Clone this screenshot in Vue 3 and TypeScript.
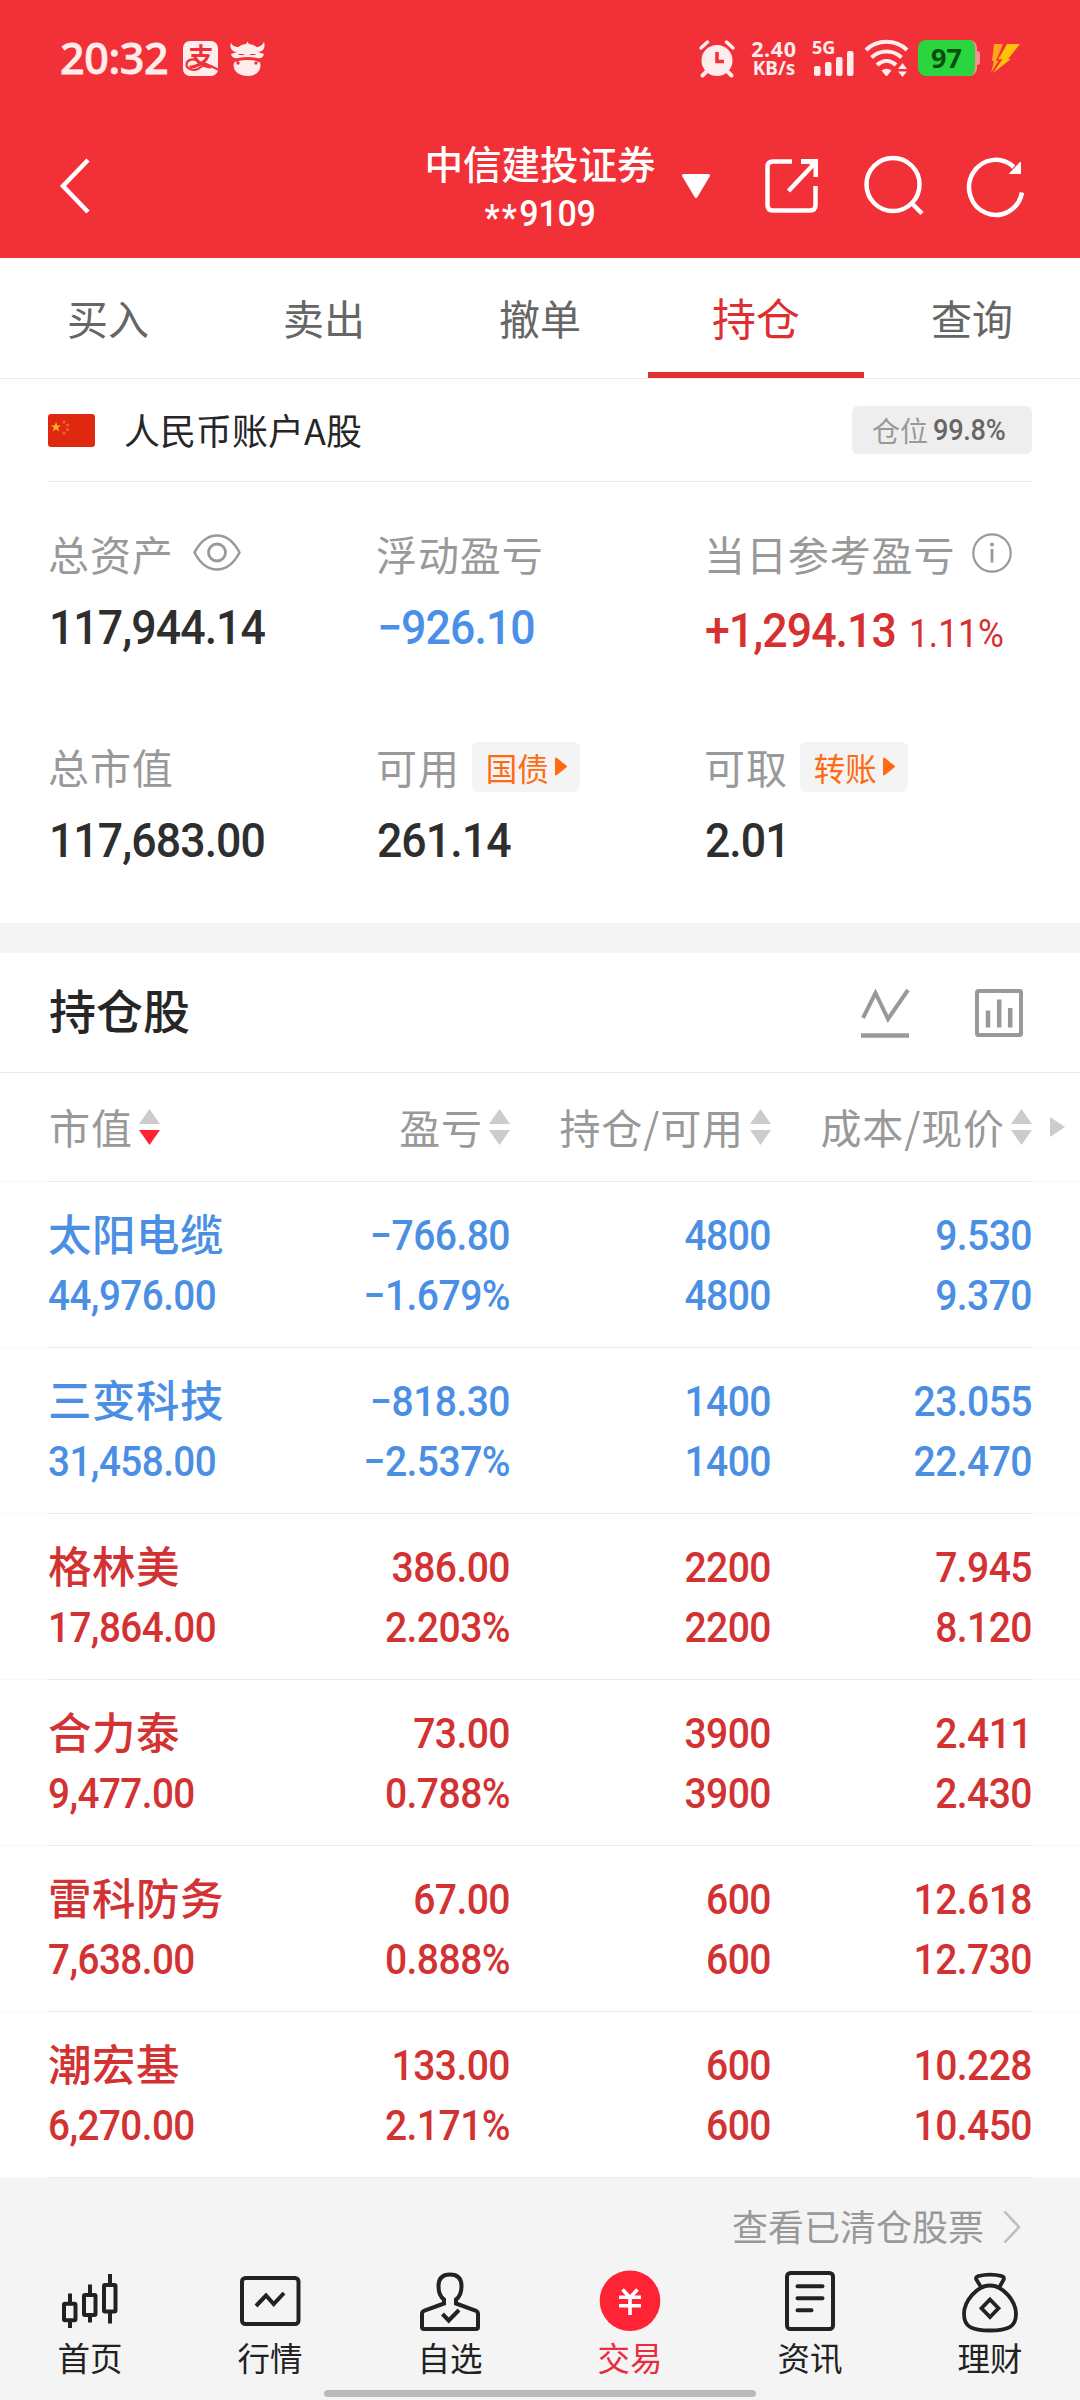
<script setup lang="ts">
type Tone = 'up' | 'down'

interface Holding {
  name: string
  value: string
  profit: string
  rate: string
  held: string
  usable: string
  cost: string
  price: string
  tone: Tone
}

const tabs: string[] = ['买入', '卖出', '撤单', '持仓', '查询']
const activeTab = '持仓'

const columns: { label: string; cls: string; sorted: boolean }[] = [
  { label: '市值', cls: 'c1', sorted: true },
  { label: '盈亏', cls: 'c2', sorted: false },
  { label: '持仓/可用', cls: 'c3', sorted: false },
  { label: '成本/现价', cls: 'c4', sorted: false },
]

const holdings: Holding[] = [
  { name: '太阳电缆', value: '44,976.00', profit: '−766.80', rate: '−1.679%', held: '4800', usable: '4800', cost: '9.530', price: '9.370', tone: 'down' },
  { name: '三变科技', value: '31,458.00', profit: '−818.30', rate: '−2.537%', held: '1400', usable: '1400', cost: '23.055', price: '22.470', tone: 'down' },
  { name: '格林美', value: '17,864.00', profit: '386.00', rate: '2.203%', held: '2200', usable: '2200', cost: '7.945', price: '8.120', tone: 'up' },
  { name: '合力泰', value: '9,477.00', profit: '73.00', rate: '0.788%', held: '3900', usable: '3900', cost: '2.411', price: '2.430', tone: 'up' },
  { name: '雷科防务', value: '7,638.00', profit: '67.00', rate: '0.888%', held: '600', usable: '600', cost: '12.618', price: '12.730', tone: 'up' },
  { name: '潮宏基', value: '6,270.00', profit: '133.00', rate: '2.171%', held: '600', usable: '600', cost: '10.228', price: '10.450', tone: 'up' },
]
</script>

<template>
  <div class="page">
    <header class="header">
      <div class="status">
        <span class="clock">20:32</span>
        <svg class="alipay" viewBox="0 0 35 35">
          <rect width="35" height="35" rx="7" fill="#ffecec" />
          <text x="18" y="24.5" text-anchor="middle" class="pay-char">支</text>
          <path d="M15 19.5C9 17 3.5 19 3.5 23.5S10 30 15 28C18 26.6 20 24.5 21 22.5M20 21.5L35 28.5" fill="none" stroke="#f23037" stroke-width="2.2" />
        </svg>
        <svg class="cow" viewBox="0 0 35 35">
          <path d="M1 1.5C-.5 6 1 10.500 7 11L1 13C2 17 5 18 8 17C14 15.500 21 15.500 27 17C30 18 33 17 34 13L28 11C34 10.500 35.500 6 34 .5C33 4 29.500 6 26.500 6C24.500 4 21 3 19 3L17.500 .8L16 3C14 3 10.500 4 8.500 6C5.500 6 2 5 1 1.500Z" fill="#ffecec" />
          <path d="M3.500 24C3.500 19.500 10 18.800 17.500 18.800S30.500 19.500 30.500 24C30.500 31 25 35 17.500 35S3.500 31 3.500 24Z" fill="#ffecec" />
          <path d="M8.500 13.500H14M20 13.500H25.500" stroke="#f23037" stroke-width="1.200" />
          <path d="M6 20.500C9 17.500 26 17.500 29 20.500" fill="none" stroke="#f23037" stroke-width="1.300" />
          <circle cx="8" cy="22" r="1.700" fill="#f23037" /><circle cx="26" cy="22" r="1.700" fill="#f23037" />
        </svg>
        <div class="status-right">
          <svg class="alarm" viewBox="0 0 36 37">
            <circle cx="18" cy="20.500" r="15.500" fill="#ffecec" />
            <path d="M2 8L8.500 2M34 8L27.500 2" stroke="#ffecec" stroke-width="3.500" stroke-linecap="round" />
            <path d="M7 32L3.500 35.500M29 32L32.500 35.500" stroke="#ffecec" stroke-width="4" stroke-linecap="round" />
            <path d="M18 12V21.500H25" fill="none" stroke="#f23037" stroke-width="3.500" />
          </svg>
          <div class="speed"><span class="rate">2.40</span><span class="unit">KB/s</span></div>
          <svg class="signal" viewBox="0 0 43 38">
            <text x="0" y="14.500" class="five-g">5G</text>
            <g fill="#ffecec">
              <rect x="2" y="27" width="6.500" height="10" rx="2" />
              <rect x="13" y="23" width="6.500" height="14" rx="2" />
              <rect x="24" y="18" width="6.500" height="19" rx="2" />
              <rect x="35" y="12" width="6.500" height="25" rx="2" />
            </g>
          </svg>
          <svg class="wifi" viewBox="0 0 44 37">
            <g fill="none" stroke="#ffecec" stroke-width="4">
              <path d="M1 10C12-1 31-1 42 10" />
              <path d="M6.500 17.500C15 9.500 28 9.500 36.500 17.500" />
              <path d="M12 25C18 19.500 25 19.500 31 25" />
            </g>
            <path d="M16.500 30.500Q21.500 27 26.500 30.500L22.500 35.500Q21.500 36.500 20.500 35.500Z" fill="#ffecec" />
            <path d="M33 29L37.500 23L42 29ZM33 31.500H42L37.500 37Z" fill="#ffecec" />
          </svg>
          <div class="battery"><span>97</span><i></i></div>
          <svg class="bolt" viewBox="0 0 30 31">
            <path d="M4 1H13L8 14L12 12L1 30L4 18L2 18Z" fill="#ffa51e" />
            <path d="M17 1H30L18 16H21L3 30L11 17H8Z" fill="#ffc20a" />
            <path d="M14 2L7 17H11L4 27" fill="none" stroke="#f23037" stroke-width="1.500" />
          </svg>
        </div>
      </div>
      <div class="titlebar">
        <svg class="back" viewBox="0 0 30 56"><path d="M28 2L3 28L28 54" fill="none" stroke="#fff" stroke-width="4.500" /></svg>
        <div class="title">
          <div class="broker">中信建投证券</div>
          <div class="acct"><span class="stars">**</span>9109</div>
        </div>
        <svg class="drop" viewBox="0 0 30 25"><path d="M2.500 1.500H27.500L15 22.500Z" fill="#fff" stroke="#fff" stroke-width="3" stroke-linejoin="round" /></svg>
        <svg class="share" viewBox="0 0 56 56">
          <path d="M28 3.500H9Q3.500 3.500 3.500 9V47Q3.500 52.500 9 52.500H46Q51.500 52.500 51.500 47V28" fill="none" stroke="#fff" stroke-width="4.500" />
          <path d="M24.500 33L50 6" stroke="#fff" stroke-width="4.500" />
          <path d="M37 1H54V19H49.500V9L45 6H37Z" fill="#fff" />
        </svg>
        <svg class="search" viewBox="0 0 62 62"><circle cx="30" cy="29.500" r="26.500" fill="none" stroke="#fff" stroke-width="4.500" /><path d="M48.500 48L59 58.500" stroke="#fff" stroke-width="4.500" /></svg>
        <svg class="refresh" viewBox="0 0 58 60">
          <path d="M46.700 11A26.700 27.500 0 1 0 55 36.500" fill="none" stroke="#fff" stroke-width="4.500" />
          <path d="M42.500 17.500L53.500 6V17.500Z" fill="#fff" stroke="#fff" />
        </svg>
      </div>
    </header>

    <nav class="tabs">
      <div v-for="t in tabs" :key="t" class="tab" :class="{ active: t === activeTab }">{{ t }}</div>
    </nav>

    <section class="account">
      <svg class="flag" viewBox="0 0 47 33">
        <rect width="47" height="33" rx="3" fill="#de2910" />
        <path d="M8 8L9.300 11.500H13L10 13.700L11.200 17.500L8 15.200L4.800 17.500L6 13.700L3 11.500H6.700Z" fill="#ffb01f" />
        <g fill="#f0672a"><circle cx="16" cy="8" r="1.500" /><circle cx="19.500" cy="11" r="1.500" /><circle cx="19.500" cy="15.500" r="1.500" /><circle cx="16" cy="19" r="1.500" /></g>
      </svg>
      <span class="acct-name">人民币账户A股</span>
      <div class="position"><span>仓位</span><b>99.8%</b></div>
    </section>

    <section class="stats">
      <div class="stat">
        <div class="label">总资产
          <svg class="eye" viewBox="0 0 48 37"><path d="M1.500 18.500C8 6 16 1.500 24 1.500S40 6 46.500 18.500C40 31 32 35.500 24 35.500S8 31 1.500 18.500Z" fill="none" stroke="#999" stroke-width="2.500" /><circle cx="24" cy="18.500" r="8.500" fill="none" stroke="#999" stroke-width="2.800" /></svg>
        </div>
        <div class="num">117,944.14</div>
      </div>
      <div class="stat">
        <div class="label">浮动盈亏</div>
        <div class="num blue">−926.10</div>
      </div>
      <div class="stat">
        <div class="label">当日参考盈亏
          <svg class="info" viewBox="0 0 40 40"><circle cx="20" cy="20" r="18.700" fill="none" stroke="#999" stroke-width="2.200" /><path d="M20 16V29.500" stroke="#999" stroke-width="2.800" /><circle cx="20" cy="11.500" r="1.900" fill="#999" /></svg>
        </div>
        <div class="num red">+1,294.13<small>1.11%</small></div>
      </div>
      <div class="stat">
        <div class="label">总市值</div>
        <div class="num">117,683.00</div>
      </div>
      <div class="stat">
        <div class="label">可用<span class="chip">国债<svg viewBox="0 0 12 19"><path d="M1 1.500L11 9.500L1 17.500Z" fill="#ff6a13" stroke="#ff6a13" stroke-width="2" stroke-linejoin="round" /></svg></span></div>
        <div class="num">261.14</div>
      </div>
      <div class="stat">
        <div class="label">可取<span class="chip">转账<svg viewBox="0 0 12 19"><path d="M1 1.500L11 9.500L1 17.500Z" fill="#ff6a13" stroke="#ff6a13" stroke-width="2" stroke-linejoin="round" /></svg></span></div>
        <div class="num">2.01</div>
      </div>
    </section>

    <div class="band"></div>

    <section class="heading">
      <h2>持仓股</h2>
      <svg class="trend" viewBox="0 0 48 50"><path d="M2 30L14.500 5L27 31L47 2" fill="none" stroke="#999" stroke-width="4" /><path d="M0 47.500H48" stroke="#999" stroke-width="4.500" /></svg>
      <svg class="bars" viewBox="0 0 48 48"><rect x="2" y="2" width="44" height="44" rx="1.500" fill="none" stroke="#999" stroke-width="4" /><path d="M13 21.500V38.500M24.200 10.500V38.500M35.200 19V38.500" stroke="#999" stroke-width="4.500" /></svg>
    </section>

    <div class="thead">
      <div v-for="c in columns" :key="c.label" class="cell" :class="c.cls">
        <span>{{ c.label }}</span>
        <svg class="sort" viewBox="0 0 21 36"><path d="M0 15L10.500 0L21 15Z" fill="#ccc" /><path d="M0 21L10.500 36L21 21Z" :fill="c.sorted ? '#ff2336' : '#ccc'" /></svg>
      </div>
      <svg class="more" viewBox="0 0 15 20"><path d="M0 0L15 10L0 20Z" fill="#ccc" /></svg>
    </div>
    <div class="rule"></div>

    <div v-for="h in holdings" :key="h.name" class="holding" :class="h.tone">
      <div class="row-body">
        <div class="c1"><div class="name">{{ h.name }}</div><div class="digits">{{ h.value }}</div></div>
        <div class="c2"><div class="digits">{{ h.profit }}</div><div class="digits">{{ h.rate }}</div></div>
        <div class="c3"><div class="digits">{{ h.held }}</div><div class="digits">{{ h.usable }}</div></div>
        <div class="c4"><div class="digits">{{ h.cost }}</div><div class="digits">{{ h.price }}</div></div>
      </div>
      <div class="rule"></div>
    </div>

    <footer class="footer">
      <div class="cleared"><span>查看已清仓股票</span><svg viewBox="0 0 18 34"><path d="M1.500 1.500L16 17L1.500 32.500" fill="none" stroke="#bdbdbd" stroke-width="2.500" /></svg></div>
      <div class="nav">
        <div class="item">
          <svg viewBox="0 0 70 68" fill="none" stroke="#222" stroke-width="4">
            <rect x="9" y="35.700" width="11.500" height="16.500" rx="1" /><path d="M15 25.500V35M15 53V60" />
            <rect x="29" y="27" width="11.500" height="20" rx="1" /><path d="M35 16.500V26M35 48V54.500" />
            <rect x="49" y="17" width="11.500" height="26.500" rx="1" /><path d="M55 6V16M55 44V55.500" />
          </svg>
          <span>首页</span>
        </div>
        <div class="item">
          <svg viewBox="0 0 70 68" fill="none" stroke="#222" stroke-width="4">
            <rect x="7" y="10" width="56.500" height="46" rx="3.500" /><path d="M21 38L31 27.500L38.700 36L49 25" />
          </svg>
          <span>行情</span>
        </div>
        <div class="item">
          <svg viewBox="0 0 70 68" fill="none" stroke="#222" stroke-width="4">
            <path d="M29 31.500C24 28 23.500 22 23.500 18C23.500 10 28 6.500 35 6.500S46.500 10 46.500 18C46.500 22 46 28 41 31.500V35.500L60.500 42.500Q63 43.500 63 46V59Q63 61 61 61H9Q7 61 7 59V46Q7 43.500 9.500 42.500L29 35.500Z" />
            <path d="M27.500 46L33.700 52.500L44 42" />
          </svg>
          <span>自选</span>
        </div>
        <div class="item on">
          <svg viewBox="0 0 70 68">
            <circle cx="35" cy="32.700" r="30.300" fill="#ff2336" />
            <path d="M24 29.300H46M24 37.700H46M35 29V47M27.500 21.500L35 29.500L42.500 21.500" fill="none" stroke="#fff" stroke-width="3.600" />
          </svg>
          <span>交易</span>
        </div>
        <div class="item">
          <svg viewBox="0 0 70 68" fill="none" stroke="#222" stroke-width="4">
            <rect x="12" y="5" width="46" height="56" rx="3.500" /><path d="M22.500 18.300H47.500M22.500 30.300H47.500M22.500 42.300H36.500" stroke-linecap="round" />
          </svg>
          <span>资讯</span>
        </div>
        <div class="item">
          <svg viewBox="0 0 70 68" fill="none" stroke="#222" stroke-width="3.800">
            <path d="M35 17.500C22 17.500 9 33 9 46C9 59 17 62.500 35 62.500S61 59 61 46C61 33 48 17.500 35 17.500Z" />
            <path d="M26 19L21.300 11.500Q20.500 9 23 8.200Q35 5.200 47 8.200Q49.500 9 48.700 11.500L44.500 19" />
            <path d="M35 31.500L43.500 40.300L35 49L26.500 40.300Z" />
          </svg>
          <span>理财</span>
        </div>
      </div>
      <div class="indicator"></div>
    </footer>
  </div>
</template>

<style>
body { margin: 0; background: #f4f4f4; }
</style>

<style scoped>
.page { width: 1080px; height: 2400px; overflow: hidden; background: #fff; font-family: "Noto Sans CJK SC", sans-serif; color: #222; }
.page * { box-sizing: border-box; }
svg { display: block; flex: none; overflow: visible; }

.header { height: 258px; background: #f23037; }
.status { height: 116px; display: flex; align-items: center; padding-left: 60px; color: #ffecec; }
.clock { font: 500 43px/60px "Noto Sans", sans-serif; width: 123px; letter-spacing: -0.4px; -webkit-text-stroke: 0.8px #ffecec; }
.alipay { width: 35px; height: 35px; }
.pay-char { font: 700 25px "Noto Sans CJK SC", sans-serif; fill: #f23037; }
.cow { width: 35px; height: 35px; margin-left: 12px; }
.status-right { display: flex; align-items: center; margin-left: auto; padding-right: 60px; }
.alarm { width: 36px; height: 37px; }
.speed { width: 48px; margin-left: 15px; display: flex; flex-direction: column; align-items: center; font-family: "Noto Sans", sans-serif; font-weight: 700; }
.rate { font-size: 21.500px; line-height: 20px; letter-spacing: 0.700px; }
.unit { font-size: 19px; line-height: 18px; }
.signal { width: 43px; height: 38px; margin-left: 14px; }
.five-g { font: 700 18px "Noto Sans", sans-serif; fill: #ffecec; }
.wifi { width: 44px; height: 37px; margin-left: 10px; }
.battery { display: flex; align-items: center; width: 63px; height: 36px; margin-left: 9px; }
.battery span { width: 59px; height: 36px; border-radius: 8px; background: #29d63f; border-right: 2px solid #f78f94; color: #054f0a; font: 700 27px/36px "Noto Sans", sans-serif; text-align: center; }
.battery i { width: 3px; height: 14px; background: #f78f94; border-radius: 0 3px 3px 0; }
.bolt { width: 30px; height: 31px; margin-left: 9px; }

.titlebar { height: 142px; display: flex; align-items: center; padding: 0 0 2px 60px; }
.back { width: 30px; height: 56px; }
.title { width: 240px; margin-left: 330px; text-align: center; color: #fff; }
.broker { font-size: 38.500px; font-weight: 500; line-height: 49px; white-space: nowrap; padding-top: 1px; }
.acct { font: 500 37px/48px Roboto, sans-serif; letter-spacing: -0.300px; position: relative; top: 3px; transform: scaleX(0.92); }
.stars { font-size: 37px; letter-spacing: 2.500px; position: relative; top: 4px; }
.drop { width: 30px; height: 25px; margin-left: 21px; }
.share { width: 56px; height: 56px; margin-left: 53px; }
.search { width: 62px; height: 62px; margin-left: 43px; }
.refresh { width: 58px; height: 60px; margin-left: 42px; }

.tabs { display: flex; height: 121px; border-bottom: 1px solid #ebebeb; }
.tab { width: 216px; height: 120px; line-height: 118px; text-align: center; font-size: 41px; color: #666; border-bottom: 6px solid transparent; }
.tab.active { color: #de2e30; border-color: #e0302f; font-size: 44px; }

.account { display: flex; align-items: center; height: 103px; margin: 0 48px; border-bottom: 1px solid #ebebeb; }
.flag { width: 47px; height: 33px; }
.acct-name { margin-left: 29px; font-size: 36px; color: #262626; position: relative; top: -1px; }
.position { margin-left: auto; width: 180px; height: 48px; border-radius: 6px; background: #eee; display: flex; align-items: center; padding-left: 20px; }
.position span { font-size: 28px; line-height: 44px; color: #999; }
.position b { font: 500 29.500px/48px Roboto, sans-serif; color: #666; margin-left: 5px; letter-spacing: -0.300px; transform: scaleX(0.92); transform-origin: left; }

.stats { height: 441px; display: grid; grid-template-columns: 328px 328px 1fr; grid-auto-rows: 123px; row-gap: 90px; padding: 47px 0 0 48px; }
.label { display: flex; align-items: center; height: 50px; line-height: 46px; font-size: 41px; letter-spacing: 0.900px; color: #999; white-space: nowrap; padding-bottom: 3px; }
.eye { width: 48px; height: 37px; margin-left: 19px; }
.info { width: 40px; height: 40px; margin-left: 17px; }
.num { margin-top: 24px; padding-left: 1px; font: 500 48px/50px Roboto, sans-serif; letter-spacing: -1px; color: #2e2e2e; white-space: nowrap; transform: scaleX(0.93); transform-origin: left; }
.blue { color: #4a90e8; }
.red { color: #d63031; position: relative; top: 3px; }
.red small { font-size: 38px; font-weight: 400; margin-left: 14px; letter-spacing: 0; }
.chip { display: flex; align-items: center; flex: none; height: 50px; width: 108px; margin-left: 12px; padding-left: 14px; border-radius: 6px; background: #f4f4f4; color: #ff6a13; font-size: 31.500px; letter-spacing: 0; line-height: 46px; position: relative; top: 1px; }
.chip svg { width: 12px; height: 19px; margin-left: 6px; }

.band { height: 30px; background: #f4f4f4; }
.heading { display: flex; align-items: center; height: 120px; padding: 0 57px 0 49px; border-bottom: 1px solid #ebebeb; }
.heading h2 { margin: 0 auto 0 0; font-size: 47px; font-weight: 500; line-height: 60px; padding-bottom: 7px; color: #262626; }
.trend { width: 48px; height: 50px; }
.bars { width: 48px; height: 48px; margin-left: 66px; }

.thead { display: flex; align-items: center; height: 108px; padding-left: 49px; font-size: 41px; letter-spacing: 0.900px; color: #999; }
.cell { display: flex; align-items: center; justify-content: flex-end; white-space: nowrap; line-height: 56px; }
.thead .cell span { padding-bottom: 2px; }
.sort { width: 21px; height: 36px; margin-left: 6px; }
.c1 { width: 201px; }
.c2 { width: 260px; text-align: right; }
.c3 { width: 261px; text-align: right; }
.c4 { width: 261px; text-align: right; }
.cell.c1 { justify-content: flex-start; }
.more { width: 15px; height: 20px; margin-left: 18px; }
.rule { height: 1px; background: linear-gradient(90deg, #f7f7f7 48px, #ebebeb 48px, #ebebeb 1032px, #f7f7f7 1032px); }

.row-body { display: flex; height: 165px; padding: 24px 0 0 48px; font: 500 42px/60px Roboto, sans-serif; letter-spacing: -0.600px; white-space: nowrap; }
.digits { transform: scaleX(0.93); transform-origin: right; }
.c1 .digits { transform: scaleX(0.92); transform-origin: left; }
.row-body .c1 { width: 202px; }
.name { font: 500 43.500px/60px "Noto Sans CJK SC", sans-serif; letter-spacing: 0.500px; height: 60px; position: relative; top: -3px; }
.down { color: #4a8fe4; }
.up { color: #d33233; }

.footer { height: 222px; background: #f4f4f4; }
.cleared { display: flex; align-items: center; justify-content: flex-end; height: 90px; padding: 8px 59px 0 0; font-size: 36px; color: #999; }
.cleared span { padding-bottom: 4px; }
.cleared svg { width: 18px; height: 34px; margin-left: 19px; }
.nav { display: flex; }
.item { width: 180px; display: flex; flex-direction: column; align-items: center; font-size: 32.500px; line-height: 44px; color: #222; }
.item svg { width: 70px; height: 68px; }
.item span { margin-top: -1px; }
.on { color: #ea2c3e; }
.indicator { width: 432px; height: 7px; border-radius: 4px; background: #bababa; margin: 11px auto 0; }
</style>
